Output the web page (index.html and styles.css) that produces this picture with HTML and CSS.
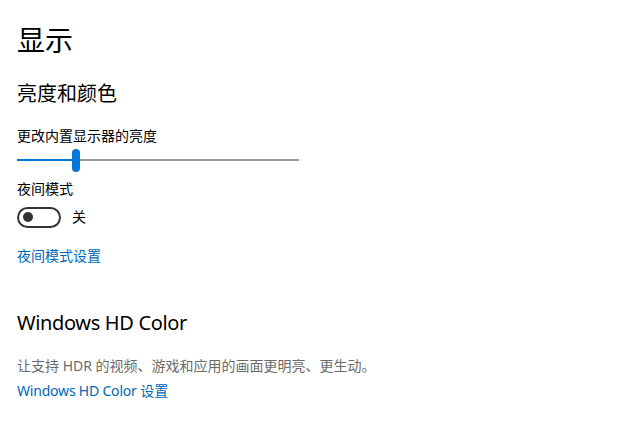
FILE: index.html
```html
<!DOCTYPE html>
<html lang="zh-CN">
<head>
<meta charset="utf-8">
<link rel="stylesheet" href="styles.css">
</head>
<body>
<main class="page">
  <h1 class="title">显示</h1>
  <h2 class="subtitle">亮度和颜色</h2>
  <div class="label label-brightness">更改内置显示器的亮度</div>
  <div class="slider">
    <div class="track-fill"></div>
    <div class="thumb"></div>
    <div class="track-rest"></div>
  </div>
  <div class="label label-night">夜间模式</div>
  <div class="toggle-row">
    <div class="toggle"><div class="knob"></div></div>
    <span class="toggle-text">关</span>
  </div>
  <a class="link link-night">夜间模式设置</a>
  <h2 class="subtitle subtitle-hd">Windows HD Color</h2>
  <div class="desc">让支持 HDR 的视频、游戏和应用的画面更明亮、更生动。</div>
  <a class="link link-hd"><span class="latin">Windows HD Color</span> 设置</a>
</main>
</body>
</html>
```
FILE: styles.css
```css
html, body {
  margin: 0;
  padding: 0;
  background: #ffffff;
}
body {
  font-family: "Noto Sans", "Noto Sans CJK SC", sans-serif;
  color: #000;
}
.page {
  display: flex;
  flex-direction: column;
  align-items: flex-start;
  padding: 20px 0 0 17px;
}
.title {
  margin: 0;
  font-size: 28px;
  font-weight: 400;
  line-height: 40px;
}
.subtitle {
  margin: 20px 0 0 0;
  font-size: 20px;
  font-weight: 400;
  line-height: 28px;
}
.label {
  font-size: 14px;
  line-height: 20px;
}
.label-brightness { margin-top: 18px; }
.slider {
  margin-top: 2px;
  width: 282px;
  height: 24px;
  display: flex;
  align-items: center;
}
.track-fill {
  width: 55px;
  height: 2px;
  background: #0078d7;
}
.thumb {
  width: 8px;
  height: 23px;
  border-radius: 4px;
  background: #0078d7;
}
.track-rest {
  flex: 1;
  height: 2px;
  background: #999;
}
.label-night { margin-top: 7px; }
.toggle-row {
  margin-top: 7px;
  display: flex;
  align-items: center;
  gap: 11px;
  height: 22px;
}
.toggle {
  box-sizing: border-box;
  width: 44px;
  height: 21px;
  border: 2px solid #333;
  border-radius: 11px;
  display: flex;
  align-items: center;
  padding-left: 4px;
}
.knob {
  width: 10px;
  height: 10px;
  border-radius: 50%;
  background: #333;
}
.toggle-text {
  font-size: 14px;
  line-height: 20px;
}
.link {
  color: #0067b8;
  font-size: 14px;
  line-height: 20px;
}
.link-night { margin-top: 18px; }
.subtitle-hd {
  margin-top: 43px;
  letter-spacing: -0.35px;
}
.desc {
  margin-top: 19px;
  font-size: 14px;
  line-height: 20px;
  color: #6b6b6b;
}
.link-hd { margin-top: 5px; }
.latin { letter-spacing: -0.2px; }
```
